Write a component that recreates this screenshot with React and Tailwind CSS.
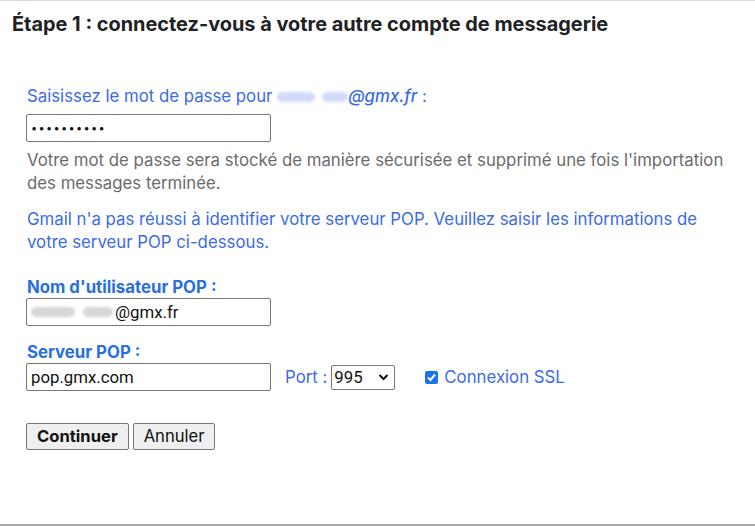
import React from "react";

export default function App() {
  const blue = "text-[#3b6be6]";
  return (
    <div className="w-[755px] h-[526px] bg-white border-t border-t-[#dcdcdc] border-b-2 border-b-[#a8a8a8] font-['Inter',sans-serif] overflow-hidden">
      <div className="pl-[12px] pt-[11px] text-[19.9px] font-bold text-[#202124] leading-[24px]">
        Étape 1 : connectez-vous à votre autre compte de messagerie
      </div>
      <div className="pl-[26px] pt-[49px] text-[16.8px] leading-[23px]">
        <div className={`${blue} pl-[1px]`}>
          Saisissez le mot de passe pour{" "}
          <span aria-hidden="true" className="inline-block align-middle blur-[1.5px] bg-[#d2dafa] h-[10px] w-[38px] rounded-full"></span>
          <span aria-hidden="true" className="inline-block align-middle ml-[7px] blur-[1.5px] bg-[#d2dafa] h-[10px] w-[26px] rounded-full"></span>
          <span className="italic font-medium">@gmx.fr</span> :
        </div>
        <div className="mt-[6px]">
          <div className="w-[245px] h-[28px] border border-[#767676] rounded-[2px] flex items-center pl-[4px] text-[#111] text-[11px] tracking-[1.3px]">
            ••••••••••
          </div>
        </div>
        <div className="mt-[7px] text-[#6b6b6b] pl-[1px] max-w-[700px]">
          Votre mot de passe sera stocké de manière sécurisée et supprimé une fois l'importation des messages terminée.
        </div>
        <div className={`${blue} mt-[13px] pl-[1px] max-w-[690px]`}>
          Gmail n'a pas réussi à identifier votre serveur POP. Veuillez saisir les informations de votre serveur POP ci-dessous.
        </div>
        <div className="mt-[22px] pl-[1px] font-bold text-[#2a6fe0] leading-[22px]">Nom d'utilisateur POP :</div>
        <div className="w-[245px] h-[28px] border border-[#767676] rounded-[2px] flex items-center pl-[4px] text-[#111] font-['Roboto',sans-serif]">
          <span aria-hidden="true" className="inline-block blur-[1.5px] bg-[#d6d6d6] h-[10px] w-[44px] rounded-full"></span>
          <span aria-hidden="true" className="inline-block ml-[8px] mr-[2px] blur-[1.5px] bg-[#d6d6d6] h-[10px] w-[30px] rounded-full"></span>
          @gmx.fr
        </div>
        <div className="mt-[15px] pl-[1px] font-bold text-[#2a6fe0] leading-[22px]">Serveur POP :</div>
        <div className="flex items-center">
          <div className="w-[245px] h-[28px] border border-[#767676] rounded-[2px] flex items-center pl-[4px] text-[#111] font-['Roboto',sans-serif]">
            pop.gmx.com
          </div>
          <span className={`${blue} ml-[14px]`}>Port :</span>
          <div className="ml-[4px] w-[64px] h-[25px] border border-[#767676] rounded-[2px] flex items-center justify-between pl-[2px] pr-[5px] text-[#111] font-['Roboto',sans-serif]">
            <span>995</span>
            <svg width="11" height="8" viewBox="0 0 11 8">
              <path d="M1.5 2 L5.5 6 L9.5 2" fill="none" stroke="#111" strokeWidth="2" />
            </svg>
          </div>
          <div className="ml-[30px] w-[13px] h-[13px] rounded-[2px] bg-[#1a73e8] flex items-center justify-center">
            <svg width="11" height="11" viewBox="0 0 11 11">
              <path d="M2 5.5 L4.5 8 L9 2.5" fill="none" stroke="white" strokeWidth="2" />
            </svg>
          </div>
          <span className={`${blue} ml-[6px]`}>Connexion SSL</span>
        </div>
        <div className="mt-[32px] flex gap-[4px]">
          <button className="h-[27px] px-[10px] border border-[#767676] rounded-[2px] bg-[#efefef] font-bold text-[16.6px] text-[#111]">
            Continuer
          </button>
          <button className="h-[27px] px-[10px] border border-[#767676] rounded-[2px] bg-[#efefef] text-[16.6px] text-[#111]">
            Annuler
          </button>
        </div>
      </div>
    </div>
  );
}
